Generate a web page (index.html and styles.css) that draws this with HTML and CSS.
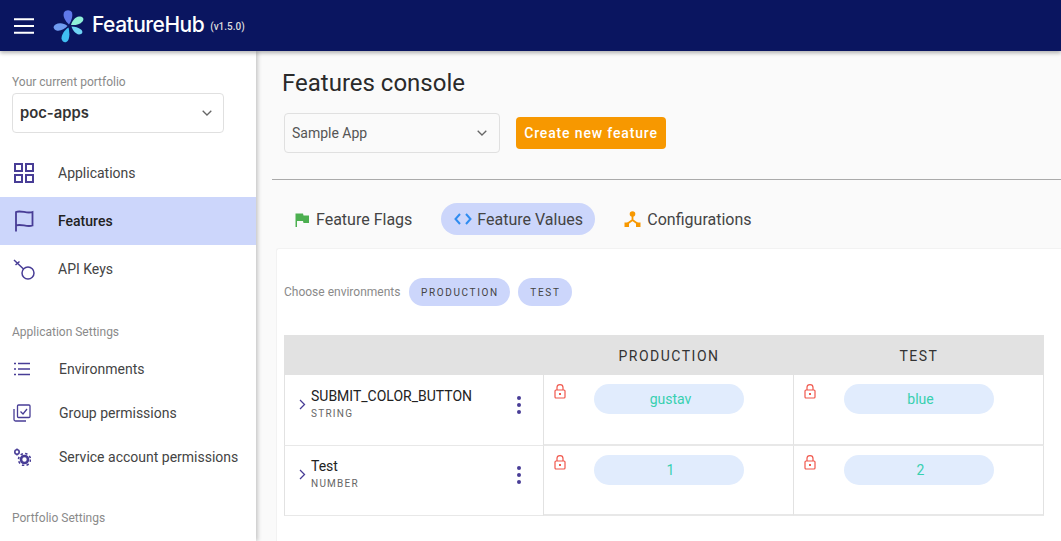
FILE: index.html
```html
<!DOCTYPE html>
<html>
<head>
    <title>FeatureHub</title>
    <link rel="stylesheet" href="styles.css">
</head>
<body>
    <header class="topbar">
        <svg class="burger" width="20" height="16" viewBox="0 0 20 16"><path d="M0 1.2h20M0 8h20M0 14.8h20" stroke="#fff" stroke-width="2"/></svg>
        <svg class="logo" width="34" height="34" viewBox="0 0 34 34">
            <path d="M16 15.500C12 12 9.500 7 11 3.500C12.500 0.500 17.500 0.500 19 3.500C20 7 18.500 12 16 15.500Z" fill="#5f78ea"/>
            <path d="M18 16C19 12 22 8 26 7.500C30 7.500 31.500 9.500 29.500 12.500C27 15.500 22 16.500 18 16Z" fill="#8ff0d8"/>
            <path d="M14.500 17C11 14 6 13.500 2.500 15.500C-0.500 17.500 0.500 20.500 3.500 21.500C7 22.500 12 20 14.500 17Z" fill="#6f9bf0"/>
            <path d="M15.500 18.500C11.500 21 8.500 25.500 8.500 29.500C9 33.500 13 34.500 15 31.500C17 28 16.500 22.500 15.500 18.500Z" fill="#40bdf2"/>
            <path d="M18.500 17.500C19.500 21 22.500 25 26 25.500C29.500 25.500 30.500 22.500 28 20.500C25.500 18.500 22 17.500 18.500 17.500Z" fill="#6fd3f5"/>
        </svg>
        <span class="brand">FeatureHub</span>
        <span class="version">(v1.5.0)</span>
    </header>
    <div class="page">
        <aside class="sidebar">
            <div class="portfolio">
                <div class="side-label">Your current portfolio</div>
                <div class="select portfolio-select">
                    <span>poc-apps</span>
                    <svg width="10" height="6" viewBox="0 0 10 6"><path d="M0.700 0.700L5 5L9.300 0.700" fill="none" stroke="#666" stroke-width="1.300"/></svg>
                </div>
            </div>
            <nav class="nav-main">
                <a class="nav-item">
                    <svg width="20" height="20" viewBox="0 0 20 20" fill="none" stroke="#483d96" stroke-width="2"><rect x="1" y="1" width="7" height="7"/><rect x="12" y="1" width="7" height="7"/><rect x="1" y="12" width="7" height="7"/><rect x="12" y="12" width="7" height="7"/></svg>
                    Applications
                </a>
                <a class="nav-item active">
                    <svg width="22" height="22" viewBox="0 0 22 22" fill="none" stroke="#483d96" stroke-width="1.800"><path d="M3 21.500V2C8 0 14 4 19.500 2V15.500C14 17.500 8 13.500 3 15.500"/></svg>
                    Features
                </a>
                <a class="nav-item">
                    <svg width="22" height="22" viewBox="0 0 22 22" fill="none" stroke="#483d96" stroke-width="1.500"><circle cx="15" cy="15" r="6"/><path d="M1 2L10.500 11M2.500 7L6.500 3.500"/></svg>
                    API Keys
                </a>
            </nav>
            <div class="side-label section-label">Application Settings</div>
            <nav class="nav-sub">
                <a class="sub-item">
                    <svg width="16" height="14" viewBox="0 0 16 14" fill="none" stroke="#483d96" stroke-width="1.300"><path d="M4 1.500H16M4 7H16M4 12.500H16M0 1.500H2M0 7H2M0 12.500H2"/></svg>
                    Environments
                </a>
                <a class="sub-item">
                    <svg width="18" height="18" viewBox="0 0 18 18" fill="none" stroke="#483d96" stroke-width="1.300"><rect x="4.500" y="1" width="12.500" height="12.500" rx="1"/><path d="M1 5V15.500C1 16.500 1.500 17 2.500 17H13"/><path d="M7.500 7.500L10 10L14 5"/></svg>
                    Group permissions
                </a>
                <a class="sub-item">
                    <svg width="18" height="18" viewBox="0 0 18 18"><circle cx="4" cy="4" r="2.200" fill="none" stroke="#483d96" stroke-width="1.600"/><path d="M3.300 0.500h1.400v1.500h-1.400zM3.300 6h1.400v1.500h-1.400z" fill="#483d96"/><circle cx="11.500" cy="11.500" r="3.500" fill="none" stroke="#483d96" stroke-width="2.600"/><circle cx="11.500" cy="11.500" r="6" fill="none" stroke="#483d96" stroke-width="1.600" stroke-dasharray="2.400 2.300"/></svg>
                    Service account permissions
                </a>
            </nav>
            <div class="side-label section-label portfolio-label">Portfolio Settings</div>
        </aside>
        <main class="content">
            <h1 class="title">Features console</h1>
            <div class="toolbar">
                <div class="select app-select">
                    <span>Sample App</span>
                    <svg width="10" height="6" viewBox="0 0 10 6"><path d="M0.700 0.700L5 5L9.300 0.700" fill="none" stroke="#666" stroke-width="1.300"/></svg>
                </div>
                <button class="create-btn">Create new feature</button>
            </div>
            <hr class="divider">
            <div class="tabs">
                <div class="tab tab-flags">
                    <svg width="14" height="14" viewBox="0 0 14 14"><path d="M0.500 14V0.500H8L8.500 2.500H14V10H8.500L8 8H2V14Z" fill="#4caf50"/></svg>
                    Feature Flags
                </div>
                <div class="tab tab-active">
                    <svg width="18" height="12" viewBox="0 0 18 12" fill="none" stroke="#2f8cf0" stroke-width="2"><path d="M6 1L1.500 6L6 11M12 1L16.500 6L12 11"/></svg>
                    Feature Values
                </div>
                <div class="tab tab-config">
                    <svg width="17" height="16" viewBox="0 0 17 16" fill="#f79800"><circle cx="8.500" cy="3" r="2.800"/><rect x="0.500" y="11.500" width="4.500" height="4.500"/><rect x="12" y="11.500" width="4.500" height="4.500"/><path d="M8.500 5V9L3 13M8.500 9L14 13" fill="none" stroke="#f79800" stroke-width="1.800"/></svg>
                    Configurations
                </div>
            </div>
            <section class="card">
                <div class="env-row">
                    <span class="env-label">Choose environments</span>
                    <span class="chip chip-prod">PRODUCTION</span>
                    <span class="chip chip-test">TEST</span>
                </div>
                <div class="grid">
                    <div class="grid-head"></div>
                    <div class="grid-head">PRODUCTION</div>
                    <div class="grid-head">TEST</div>

                    <div class="cell name-cell">
                        <svg class="chev" width="7" height="11" viewBox="0 0 7 11"><path d="M1 1L5.500 5.500L1 10" fill="none" stroke="#483d96" stroke-width="1.300"/></svg>
                        <div class="name-text">
                            <div class="feature-name">SUBMIT_COLOR_BUTTON</div>
                            <div class="feature-type">STRING</div>
                        </div>
                        <div class="dots"><i></i><i></i><i></i></div>
                    </div>
                    <div class="cell value-cell">
                        <svg class="lock" width="12" height="15" viewBox="0 0 12 15"><path d="M3 6V3.500C3 -0.300 9 -0.300 9 3.500V6" fill="none" stroke="#f0574c" stroke-width="1.200"/><rect x="1" y="6" width="10" height="8" rx="1" fill="none" stroke="#f0574c" stroke-width="1.200"/><rect x="5" y="9" width="2" height="2" fill="#f0574c"/></svg>
                        <span class="value-pill">gustav</span>
                    </div>
                    <div class="cell value-cell">
                        <svg class="lock" width="12" height="15" viewBox="0 0 12 15"><path d="M3 6V3.500C3 -0.300 9 -0.300 9 3.500V6" fill="none" stroke="#f0574c" stroke-width="1.200"/><rect x="1" y="6" width="10" height="8" rx="1" fill="none" stroke="#f0574c" stroke-width="1.200"/><rect x="5" y="9" width="2" height="2" fill="#f0574c"/></svg>
                        <span class="value-pill">blue</span>
                    </div>

                    <div class="cell name-cell last-row">
                        <svg class="chev" width="7" height="11" viewBox="0 0 7 11"><path d="M1 1L5.500 5.500L1 10" fill="none" stroke="#483d96" stroke-width="1.300"/></svg>
                        <div class="name-text">
                            <div class="feature-name">Test</div>
                            <div class="feature-type">NUMBER</div>
                        </div>
                        <div class="dots"><i></i><i></i><i></i></div>
                    </div>
                    <div class="cell value-cell">
                        <svg class="lock" width="12" height="15" viewBox="0 0 12 15"><path d="M3 6V3.500C3 -0.300 9 -0.300 9 3.500V6" fill="none" stroke="#f0574c" stroke-width="1.200"/><rect x="1" y="6" width="10" height="8" rx="1" fill="none" stroke="#f0574c" stroke-width="1.200"/><rect x="5" y="9" width="2" height="2" fill="#f0574c"/></svg>
                        <span class="value-pill">1</span>
                    </div>
                    <div class="cell value-cell">
                        <svg class="lock" width="12" height="15" viewBox="0 0 12 15"><path d="M3 6V3.500C3 -0.300 9 -0.300 9 3.500V6" fill="none" stroke="#f0574c" stroke-width="1.200"/><rect x="1" y="6" width="10" height="8" rx="1" fill="none" stroke="#f0574c" stroke-width="1.200"/><rect x="5" y="9" width="2" height="2" fill="#f0574c"/></svg>
                        <span class="value-pill">2</span>
                    </div>
                </div>
            </section>
        </main>
    </div>
</body>
</html>
```

FILE: styles.css
```css
html, body {
    height: 100%;
    overflow: hidden;
}

body {
    margin: 0;
    font-family: Roboto, "Liberation Sans", sans-serif;
    color: #333;
    background-color: #fafafa;
}

.topbar {
    height: 51px;
    background-color: #0a1560;
    display: flex;
    align-items: center;
    padding-left: 14px;
    box-shadow: 0 2px 4px rgba(0, 0, 0, 0.3);
    position: relative;
    z-index: 2;
}

.burger {
    margin-right: 19px;
}

.logo {
    margin-right: 5px;
}

.brand {
    font-family: Inter, sans-serif;
    font-size: 21px;
    font-weight: 500;
    letter-spacing: -0.5px;
    color: #fff;
    padding-bottom: 3px;
}

.version {
    font-size: 10px;
    font-weight: 500;
    color: #ddd;
    margin-left: 6px;
    padding-top: 2px;
}

.page {
    display: flex;
    height: 490px;
}

.sidebar {
    width: 256px;
    flex-shrink: 0;
    background-color: #fff;
    box-shadow: 2px 0 4px rgba(0, 0, 0, 0.2);
    position: relative;
    z-index: 1;
}

.portfolio {
    padding: 24px 32px 0 12px;
}

.side-label {
    font-size: 12px;
    line-height: 15px;
    color: #8a8a8a;
}

.select {
    display: flex;
    align-items: center;
    justify-content: space-between;
    height: 40px;
    border: 1px solid #e0e0e0;
    border-radius: 4px;
    box-sizing: border-box;
}

.portfolio-select {
    margin-top: 3px;
    padding: 0 11px 0 7px;
    font-family: Inter, sans-serif;
    font-size: 14.800px;
    font-weight: 600;
}

.nav-main {
    margin-top: 16px;
}

.nav-item {
    display: flex;
    align-items: center;
    height: 48px;
    font-size: 14px;
    color: #444;
    padding-left: 13px;
}

.nav-item svg {
    width: 22px;
    margin-right: 23px;
}

.nav-item.active {
    background-color: #ccd6fb;
    color: #222;
    font-weight: 500;
}

.section-label {
    margin: 32px 0 0 12px;
}

.nav-sub {
    margin-top: 7px;
}

.sub-item {
    display: flex;
    align-items: center;
    height: 44px;
    font-size: 14px;
    color: #444;
    padding-left: 13px;
}

.sub-item svg {
    width: 18px;
    margin-right: 28px;
}

.portfolio-label {
    margin-top: 32px;
}

.content {
    flex: 1;
    min-width: 0;
    padding-left: 16px;
}

.title {
    margin: 18px 0 0 10px;
    font-size: 24px;
    font-weight: 400;
    line-height: 28px;
    color: #2a2a2a;
}

.toolbar {
    display: flex;
    align-items: center;
    margin: 16px 0 0 12px;
}

.app-select {
    width: 216px;
    padding: 0 12px 0 7px;
    font-size: 14px;
    color: #555;
}

.create-btn {
    margin-left: 16px;
    height: 32px;
    width: 150px;
    padding: 0;
    border: none;
    border-radius: 4px;
    background-color: #f79800;
    color: #fff;
    font-family: Roboto, sans-serif;
    font-size: 14px;
    font-weight: 500;
    letter-spacing: 0.85px;
}

.divider {
    margin: 26px 0 0 0;
    border: none;
    border-top: 1px solid #aaa;
}

.tabs {
    display: flex;
    align-items: center;
    margin: 23px 0 0 0;
    height: 32px;
    font-size: 16px;
    color: #444;
}

.tab {
    display: flex;
    align-items: center;
    height: 32px;
    border-radius: 16px;
}

.tab-flags {
    margin-left: 23px;
    gap: 7px;
}

.tab-flags svg {
    margin-top: 1px;
}

.tab-active {
    margin-left: 29px;
    width: 154px;
    padding-left: 13px;
    box-sizing: border-box;
    gap: 5px;
    background-color: #ccd6fb;
}

.tab-config {
    margin-left: 29px;
    gap: 6px;
}

.card {
    margin: 13px 0 0 4px;
    height: 293px;
    box-sizing: border-box;
    background-color: #fff;
    border-top: 1px solid #f2f2f2;
    border-left: 1px solid #f2f2f2;
    border-radius: 3px 0 0 0;
    padding: 29px 17px 0 7px;
}

.env-row {
    display: flex;
    align-items: center;
}

.env-label {
    font-size: 12px;
    color: #8a8a8a;
    margin-right: 9px;
}

.chip {
    display: flex;
    align-items: center;
    justify-content: center;
    height: 28px;
    border-radius: 14px;
    background-color: #ccd6fb;
    font-size: 10px;
    letter-spacing: 1.650px;
    color: #444;
}

.chip-prod {
    width: 101px;
}

.chip-test {
    width: 54px;
    margin-left: 8px;
}

.grid {
    display: grid;
    grid-template-columns: 260px 250px 250px;
    grid-template-rows: 40px 71px 70px;
    margin-top: 29px;
}

.grid-head {
    display: flex;
    align-items: center;
    justify-content: center;
    padding-top: 1px;
    background-color: #e2e2e2;
    font-size: 14px;
    letter-spacing: 1.500px;
    color: #333;
}

.cell {
    box-sizing: border-box;
    display: flex;
    border-right: 1px solid #e2e2e2;
    border-bottom: 2px solid #e8e8e8;
}

.name-cell {
    border-left: 1px solid #e2e2e2;
    border-bottom-width: 1px;
    padding: 12px 0 0 14px;
}

.name-cell.last-row {
    padding-top: 11px;
}

.chev {
    margin-top: 12px;
    flex-shrink: 0;
}

.name-text {
    margin-left: 5px;
    flex: 1;
}

.feature-name {
    font-size: 14px;
    line-height: 18px;
    color: #222;
}

.feature-type {
    font-size: 10px;
    letter-spacing: 1.250px;
    line-height: 16px;
    margin-top: 1px;
    color: #666;
}

.dots {
    display: flex;
    flex-direction: column;
    gap: 3px;
    margin: 9px 22px 0 0;
}

.dots i {
    display: block;
    width: 4px;
    height: 4px;
    border-radius: 50%;
    background-color: #483d96;
}

.value-cell {
    padding: 9px 0 0 10px;
    align-items: flex-start;
}

.value-pill {
    margin-left: 28px;
    width: 150px;
    height: 30px;
    border-radius: 15px;
    background-color: #e1ecfd;
    color: #38d0b0;
    font-size: 14px;
    line-height: 30px;
    text-align: center;
    text-indent: 3px;
}
```
